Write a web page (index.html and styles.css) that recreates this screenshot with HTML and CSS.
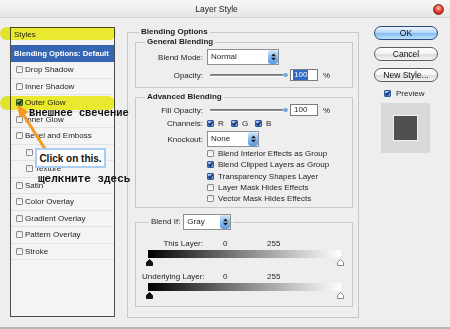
FILE: index.html
```html
<!DOCTYPE html>
<html lang="en">
<head>
    <meta charset="UTF-8">
    <meta name="viewport" content="width=device-width, initial-scale=1.0">
    <title>Layer Style</title>
    <link rel="stylesheet" href="styles.css">
</head>
<body>
    <div class="window">
        <div class="titlebar">
            <span class="title">Layer Style</span>
            <span class="close"></span>
        </div>

        <div class="content">
            <ul class="style_list">
                <li class="styles_item">Styles</li>
                <li class="active">Blending Options: Default</li>
                <li><span class="cb"></span>Drop Shadow</li>
                <li><span class="cb"></span>Inner Shadow</li>
                <li><span class="cb on"><svg viewBox="0 0 5 5" width="5" height="5"><path d="M0.4 2.4 2 4 4.7 0.5" fill="none" stroke="#10204a" stroke-width="1.4"/></svg></span>Outer Glow</li>
                <li><span class="cb"></span>Inner Glow</li>
                <li><span class="cb"></span>Bevel and Emboss</li>
                <li class="sub"><span class="cb"></span>Contour</li>
                <li class="sub"><span class="cb"></span>Texture</li>
                <li><span class="cb"></span>Satin</li>
                <li><span class="cb"></span>Color Overlay</li>
                <li><span class="cb"></span>Gradient Overlay</li>
                <li><span class="cb"></span>Pattern Overlay</li>
                <li><span class="cb"></span>Stroke</li>
            </ul>

            <fieldset class="group outer">
                <legend>Blending Options</legend>

                <fieldset class="group general">
                    <legend>General Blending</legend>
                    <div class="row first">
                        <span class="label">Blend Mode:</span>
                        <span class="select normal">Normal<span class="spin"><svg viewBox="0 0 5 8" width="5" height="8"><path d="M2.5 0.5 5 3.2H0z M2.5 7.5 5 4.8H0z" fill="#1a1a1a"/></svg></span></span>
                    </div>
                    <div class="row gap4">
                        <span class="label">Opacity:</span>
                        <span class="slider"><span class="thumb"></span></span>
                        <span class="num"><span class="sel">100</span></span>
                        <span class="pct">%</span>
                    </div>
                </fieldset>

                <fieldset class="group advanced">
                    <legend>Advanced Blending</legend>
                    <div class="row first">
                        <span class="label">Fill Opacity:</span>
                        <span class="slider"><span class="thumb"></span></span>
                        <span class="num">100</span>
                        <span class="pct">%</span>
                    </div>
                    <div class="row channels">
                        <span class="label">Channels:</span>
                        <span class="ch"><span class="cb on"><svg viewBox="0 0 5 5" width="5" height="5"><path d="M0.4 2.4 2 4 4.7 0.5" fill="none" stroke="#10204a" stroke-width="1.4"/></svg></span>R</span>
                        <span class="ch"><span class="cb on"><svg viewBox="0 0 5 5" width="5" height="5"><path d="M0.4 2.4 2 4 4.7 0.5" fill="none" stroke="#10204a" stroke-width="1.4"/></svg></span>G</span>
                        <span class="ch"><span class="cb on"><svg viewBox="0 0 5 5" width="5" height="5"><path d="M0.4 2.4 2 4 4.7 0.5" fill="none" stroke="#10204a" stroke-width="1.4"/></svg></span>B</span>
                    </div>
                    <div class="row knockout">
                        <span class="label">Knockout:</span>
                        <span class="select none">None<span class="spin"><svg viewBox="0 0 5 8" width="5" height="8"><path d="M2.5 0.5 5 3.2H0z M2.5 7.5 5 4.8H0z" fill="#1a1a1a"/></svg></span></span>
                    </div>
                    <div class="checks">
                        <div class="check"><span class="cb"></span>Blend Interior Effects as Group</div>
                        <div class="check"><span class="cb on"><svg viewBox="0 0 5 5" width="5" height="5"><path d="M0.4 2.4 2 4 4.7 0.5" fill="none" stroke="#10204a" stroke-width="1.4"/></svg></span>Blend Clipped Layers as Group</div>
                        <div class="check"><span class="cb on"><svg viewBox="0 0 5 5" width="5" height="5"><path d="M0.4 2.4 2 4 4.7 0.5" fill="none" stroke="#10204a" stroke-width="1.4"/></svg></span>Transparency Shapes Layer</div>
                        <div class="check"><span class="cb"></span>Layer Mask Hides Effects</div>
                        <div class="check"><span class="cb"></span>Vector Mask Hides Effects</div>
                    </div>
                </fieldset>

                <fieldset class="group blendif">
                    <legend>
                        <span class="legend_label">Blend If:</span>
                        <span class="select gray">Gray<span class="spin"><svg viewBox="0 0 5 8" width="5" height="8"><path d="M2.5 0.5 5 3.2H0z M2.5 7.5 5 4.8H0z" fill="#1a1a1a"/></svg></span></span>
                    </legend>
                    <div class="row layer_row first">
                        <span class="label">This Layer:</span>
                        <span class="val">0</span>
                        <span>255</span>
                    </div>
                    <div class="ramp"></div>
                    <div class="ramp_thumbs">
                        <svg viewBox="0 0 7 7" width="7" height="7"><path d="M3.5 0.5 6.5 3.3V6.5H0.5V3.3z" fill="#111" stroke="#111"/></svg>
                        <svg viewBox="0 0 7 7" width="7" height="7"><path d="M3.5 0.5 6.5 3.3V6.5H0.5V3.3z" fill="#fff" stroke="#8a8a8a"/></svg>
                    </div>
                    <div class="row layer_row second">
                        <span class="label">Underlying Layer:</span>
                        <span class="val">0</span>
                        <span>255</span>
                    </div>
                    <div class="ramp"></div>
                    <div class="ramp_thumbs">
                        <svg viewBox="0 0 7 7" width="7" height="7"><path d="M3.5 0.5 6.5 3.3V6.5H0.5V3.3z" fill="#111" stroke="#111"/></svg>
                        <svg viewBox="0 0 7 7" width="7" height="7"><path d="M3.5 0.5 6.5 3.3V6.5H0.5V3.3z" fill="#fff" stroke="#8a8a8a"/></svg>
                    </div>
                </fieldset>
            </fieldset>

            <div class="actions">
                <div class="btn btn_ok">OK</div>
                <div class="btn">Cancel</div>
                <div class="btn">New Style...</div>
                <div class="preview"><span class="cb on"><svg viewBox="0 0 5 5" width="5" height="5"><path d="M0.4 2.4 2 4 4.7 0.5" fill="none" stroke="#10204a" stroke-width="1.4"/></svg></span>Preview</div>
                <div class="swatch"><span class="swatch_inner"></span></div>
            </div>
        </div>

        <!-- tutorial marks drawn over the dialog -->
        <span class="mark mark_styles"></span>
        <span class="mark mark_glow"></span>
        <svg class="arrow" viewBox="0 0 60 160" width="60" height="160">
            <line x1="23" y1="114" x2="45" y2="149" stroke="#f39a1e" stroke-width="3"/>
            <polygon points="17,104 28.5,112 19.5,118" fill="#f39a1e"/>
        </svg>
        <div class="callout">Click on this.</div>
        <div class="note note_one">Внешнее свечение</div>
        <div class="note note_two">щелкните здесь</div>
    </div>
</body>
</html>
```

FILE: styles.css
```css
*, *:after, *:before {
    box-sizing: border-box;
}

body {
    margin: 0;
    font-family: "Liberation Sans", Arial, sans-serif;
    font-size: 8px;
    color: #1e1e1e;
    background: #eeeeee;
}

.window {
    position: relative;
    width: 450px;
    height: 329px;
    background: #eeeeee;
    border-bottom: 2px solid #b6b6b6;
    overflow: hidden;
}

.titlebar {
    height: 18px;
    display: flex;
    align-items: center;
    background: linear-gradient(#f8f8f8, #e6e6e6);
    border-bottom: 1px solid #d4d4d4;
    font-size: 8.5px;
    color: #222;
}

.title {
    flex: 1;
    text-align: center;
    padding-top: 1px;
}

.close {
    width: 11px;
    height: 11px;
    margin: 2px 6px 0 0;
    border-radius: 50%;
    border: 1px solid #8a2018;
    background: radial-gradient(circle at 50% 35%, #ffc2b8, #e2402f 50%, #a3160f);
}

.content {
    display: flex;
    align-items: flex-start;
    padding: 9px 0 0 10px;
}

/* left list */
.style_list {
    width: 105px;
    height: 290px;
    margin: 0;
    padding: 0;
    list-style: none;
    border: 1px solid #4b4b4b;
    background: #f4f4f4;
    flex-shrink: 0;
}

.style_list li {
    height: 16.5px;
    display: flex;
    align-items: center;
    padding-left: 5px;
    border-bottom: 1px solid #e3e3e3;
    white-space: nowrap;
}

.style_list li.styles_item {
    height: 17px;
    align-items: flex-start;
    padding: 2px 0 0 3px;
    border-bottom: 0;
}

.style_list li.active {
    height: 17px;
    padding-left: 3px;
    background: #3466b4;
    color: #fff;
    font-weight: bold;
    font-size: 7.7px;
    border-bottom: 0;
}

.style_list li.sub {
    padding-left: 15px;
}

.cb {
    display: inline-flex;
    align-items: center;
    justify-content: center;
    width: 7px;
    height: 7px;
    border: 1px solid #8c8c8c;
    border-radius: 1px;
    background: linear-gradient(#e6e6e6, #ffffff);
    flex-shrink: 0;
}

.cb.on {
    border-color: #2d5a9c;
    background: linear-gradient(#a9cbf4, #4f87dc);
}

.style_list .cb {
    margin-right: 2px;
}

/* group boxes */
.group {
    margin: 0;
    min-width: 0;
    border: 1px solid #c8c8c8;
}

.group legend {
    padding: 0 2px;
    line-height: 10px;
    font-weight: bold;
}

.outer {
    width: 232px;
    height: 291px;
    margin-left: 12px;
    padding: 0 5px 0 7px;
    flex-shrink: 0;
}

.outer > legend {
    margin-left: 4px;
}

.general,
.advanced,
.blendif {
    padding: 0 6px;
}

.general > legend,
.advanced > legend {
    margin-left: 3px;
}

.general {
    padding-bottom: 6px;
}

.advanced {
    margin-top: 4px;
    padding-bottom: 3px;
}

.blendif {
    margin-top: 6px;
    padding-bottom: 7px;
}

.blendif > legend {
    margin-left: 7px;
    font-weight: normal;
    display: flex;
    align-items: center;
    line-height: 16px;
}

.legend_label {
    margin-right: 3px;
}

/* form rows */
.row {
    display: flex;
    align-items: center;
    white-space: nowrap;
}

.row.first {
    margin-top: 2px;
}

.row.gap4 {
    margin-top: 4px;
}

.row.channels {
    margin-top: 2px;
    height: 10px;
}

.row.knockout {
    margin-top: 3px;
}

.label {
    width: 61px;
    margin-right: 4px;
    text-align: right;
    flex-shrink: 0;
}

.select {
    display: flex;
    align-items: center;
    height: 16px;
    padding-left: 3px;
    background: #fff;
    border: 1px solid #8f8f8f;
    line-height: 10px;
}

.select.normal { width: 72px; }
.select.none { width: 52px; }
.select.gray { width: 48px; }

.spin {
    display: flex;
    align-items: center;
    justify-content: center;
    width: 10px;
    height: 14px;
    margin-left: auto;
    border-radius: 3px;
    background: linear-gradient(#d2e7fb, #7fb4ec 60%, #5c9ae2);
}

.slider {
    display: flex;
    align-items: center;
    width: 78px;
    height: 5px;
    margin-left: 3px;
}

.slider:before {
    content: "";
    flex: 1;
    height: 3px;
    background: linear-gradient(#6f6f6f, #9a9a9a);
    border-bottom: 1px solid #fff;
    border-radius: 1px;
}

.thumb {
    width: 5px;
    height: 4px;
    border-radius: 50%;
    background: #6fa7e4;
}

.num {
    width: 28px;
    height: 12px;
    margin-left: 2px;
    padding-left: 3px;
    line-height: 10px;
    background: #fff;
    border: 1px solid #7b7b7b;
}

.num .sel {
    display: inline-block;
    padding: 0 1px;
    margin-left: -1px;
    background: #3169c6;
    color: #fff;
}

.pct {
    margin-left: 5px;
}

.ch {
    display: flex;
    align-items: center;
    gap: 4px;
    width: 24px;
}

.checks {
    margin-top: 1px;
    padding-left: 65px;
}

.check {
    display: flex;
    align-items: center;
    gap: 4px;
    height: 11.3px;
    white-space: nowrap;
}

/* blend if */
.layer_row.first {
    margin-top: 8px;
    height: 10px;
}

.layer_row.second {
    margin-top: 5px;
    height: 10px;
}

.val {
    width: 60px;
    padding-left: 16px;
}

.ramp {
    width: 193px;
    height: 8px;
    margin: 2px 0 0 6px;
    background: linear-gradient(to right, #000, #7a7a7a 45%, #fff);
}

.ramp_thumbs {
    display: flex;
    justify-content: space-between;
    width: 198px;
    height: 7px;
    margin: 1px 0 0 4px;
}

.ramp_thumbs svg {
    display: block;
}

/* right column */
.actions {
    display: flex;
    flex-direction: column;
    padding-left: 15px;
}

.btn {
    display: flex;
    align-items: center;
    justify-content: center;
    width: 64px;
    height: 14px;
    margin-top: 7px;
    border: 1px solid #5e5e5e;
    border-radius: 7px;
    background: linear-gradient(#ffffff, #f4f4f4 45%, #dedede 55%, #f2f2f2);
    font-size: 8.5px;
    color: #111;
}

.btn_ok {
    margin-top: -1px;
    border-color: #2a4a7c;
    background: linear-gradient(#eef6fe, #b9daf8 45%, #86bef2 55%, #bfe0fc);
}

.preview {
    display: flex;
    align-items: center;
    gap: 5px;
    height: 8px;
    margin: 7px 0 0 10px;
}

.swatch {
    display: flex;
    align-items: center;
    justify-content: center;
    width: 49px;
    height: 50px;
    margin: 6px 0 0 7px;
    background: #d9d9d9;
}

.swatch_inner {
    width: 25px;
    height: 26px;
    background: #505050;
    border: 1px solid #f0f0f0;
}

/* tutorial marks */
.mark {
    position: absolute;
    left: 0;
    height: 14px;
    border-radius: 7px;
    background: #f4f432;
    mix-blend-mode: multiply;
}

.mark_styles {
    top: 27px;
    width: 116px;
    height: 13px;
}

.mark_glow {
    top: 96px;
    width: 115px;
}

.arrow {
    position: absolute;
    left: 0;
    top: 0;
}

.callout {
    position: absolute;
    left: 35px;
    top: 148px;
    width: 71px;
    height: 20px;
    display: flex;
    align-items: center;
    justify-content: center;
    background: #fff;
    border: 2px solid #a9cdf3;
    font-weight: bold;
    font-size: 10px;
    color: #111;
}

.note {
    position: absolute;
    font-family: "Liberation Mono", "Courier New", monospace;
    font-weight: bold;
    color: #111;
    white-space: nowrap;
}

.note_one {
    left: 29px;
    top: 107px;
    font-size: 10.4px;
    line-height: 12px;
}

.note_two {
    left: 38px;
    top: 173px;
    font-size: 11px;
    line-height: 12px;
}
```
